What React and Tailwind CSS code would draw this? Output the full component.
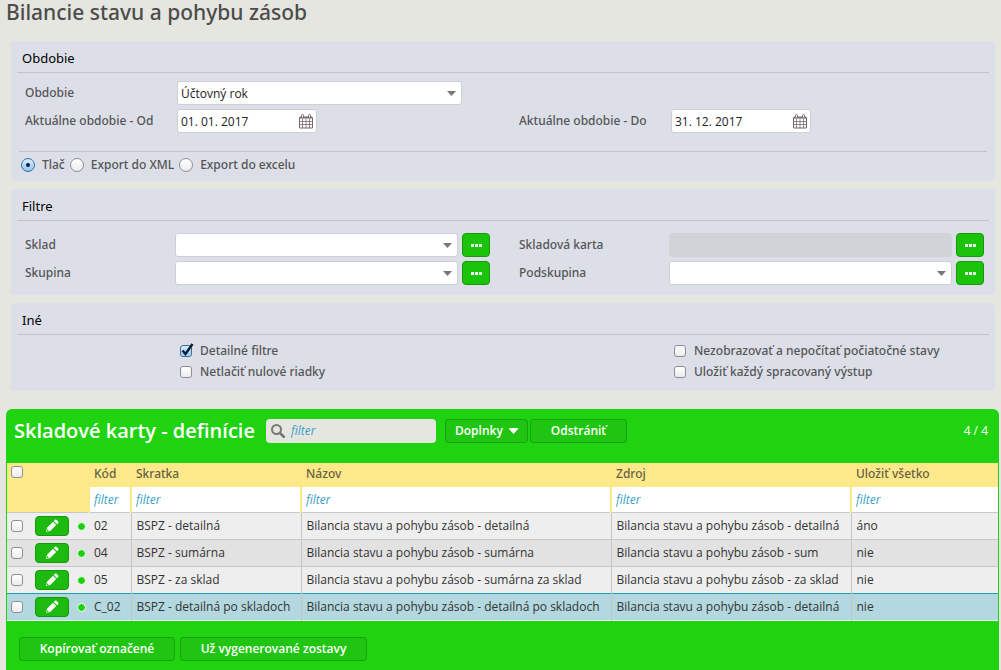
import React, { useState } from "react";

const columns = [
  { key: "code", label: "Kód", width: "w-[42px]" },
  { key: "short", label: "Skratka", width: "w-[170px]" },
  { key: "name", label: "Názov", width: "w-[310px]" },
  { key: "source", label: "Zdroj", width: "w-[240px]" },
  { key: "saveAll", label: "Uložiť všetko", width: "" },
];

const initialRows = [
  {
    code: "02",
    short: "BSPZ - detailná",
    name: "Bilancia stavu a pohybu zásob - detailná",
    source: "Bilancia stavu a pohybu zásob - detailná",
    saveAll: "áno",
  },
  {
    code: "04",
    short: "BSPZ - sumárna",
    name: "Bilancia stavu a pohybu zásob - sumárna",
    source: "Bilancia stavu a pohybu zásob - sum",
    saveAll: "nie",
  },
  {
    code: "05",
    short: "BSPZ - za sklad",
    name: "Bilancia stavu a pohybu zásob - sumárna za sklad",
    source: "Bilancia stavu a pohybu zásob - za sklad",
    saveAll: "nie",
  },
  {
    code: "C_02",
    short: "BSPZ - detailná po skladoch",
    name: "Bilancia stavu a pohybu zásob - detailná po skladoch",
    source: "Bilancia stavu a pohybu zásob - detailná",
    saveAll: "nie",
  },
];

function CalendarIcon() {
  return (
    <svg width="14" height="15" viewBox="0 0 14 15" fill="none" stroke="#75686f">
      <path d="M0.5 3.5h13v10.5h-13z" />
      <path d="M1 3.5h12" strokeWidth="2" />
      <path d="M0.5 7.5h13M0.5 10.5h13M3.5 5v9M7 5v9M10.5 5v9" strokeWidth="0.8" />
      <rect x="2.5" y="0.5" width="2" height="3.5" rx="1" fill="#fff" />
      <rect x="9.5" y="0.5" width="2" height="3.5" rx="1" fill="#fff" />
    </svg>
  );
}

function PencilIcon() {
  return (
    <svg width="14" height="14" viewBox="0 0 14 14" fill="#fff">
      <path d="M1 13 2 8.8 8 2.8 11.2 6 5.2 12z" />
      <path d="M8.8 2 10 0.8q0.7-0.5 1.4 0L13.2 2.6q0.5 0.7 0 1.4L12 5.2z" />
      <path d="M2.2 10.2 3.8 11.8 1.6 12.4z" fill="#1dbb10" />
    </svg>
  );
}

function SearchIcon() {
  return (
    <svg width="14" height="14" viewBox="0 0 14 14" fill="none" stroke="#777">
      <circle cx="5.5" cy="5.5" r="4.5" strokeWidth="2" />
      <path d="m9 9 4 4" strokeWidth="2.5" strokeLinecap="round" />
    </svg>
  );
}

function Checkbox({ className = "", ...props }) {
  return (
    <span className={`relative inline-block h-3 w-3 shrink-0 ${className}`}>
      <input
        type="checkbox"
        className="peer block h-3 w-3 appearance-none rounded-[3px] border border-[#8e8e94] bg-linear-to-b from-white to-[#ececec] checked:border-[#3c6e98] checked:from-[#d3ebfb] checked:to-[#9fd0f3]"
        {...props}
      />
      <svg
        className="pointer-events-none absolute -top-0.5 left-0 hidden h-3.5 w-3.5 peer-checked:block"
        viewBox="0 0 14 14"
        fill="none"
        stroke="#0d1f33"
        strokeWidth="2.5"
      >
        <path d="M2.5 7.5 5.5 11 12.5 1" />
      </svg>
    </span>
  );
}

function Panel({ title, children }) {
  return (
    <section className="rounded bg-[#dcdfe8]">
      <h2 className="mx-1.5 flex h-8 items-center border-b border-[#bfc3cd] px-[5px] pt-1 text-[13px] font-normal text-black">
        {title}
      </h2>
      {children}
    </section>
  );
}

function Select({ id, children }) {
  return (
    <div className="relative min-w-0 flex-1">
      <select
        id={id}
        className="block h-6 w-full appearance-none rounded-[3px] border border-[#ccd0d6] bg-white pt-px pr-6 pl-[3px] font-['Open_Sans',sans-serif] text-xs font-normal text-[#222]"
      >
        {children}
      </select>
      <svg
        className="pointer-events-none absolute top-[10px] right-1.5"
        width="9"
        height="5"
        viewBox="0 0 9 5"
        fill="#777"
      >
        <path d="M0 0h9L4.5 5z" />
      </svg>
    </div>
  );
}

function DateInput({ id, defaultValue }) {
  return (
    <div className="flex h-6 w-[140px] items-center rounded-[3px] border border-[#ccd0d6] bg-white pr-[3px]">
      <input
        id={id}
        type="text"
        defaultValue={defaultValue}
        className="min-w-0 flex-1 pt-px pl-[3px] font-['Open_Sans',sans-serif] text-xs font-normal text-[#222] outline-none"
      />
      <button type="button" aria-label="Kalendár">
        <CalendarIcon />
      </button>
    </div>
  );
}

function LookupButton({ label }) {
  return (
    <button
      type="button"
      aria-label={label}
      className="flex h-6 w-7 shrink-0 items-center justify-center rounded border border-[#17980d] bg-[#1bc40b]"
    >
      <svg width="11" height="3" viewBox="0 0 11 3" fill="#e8fbe6">
        <path d="M0 0h3v3H0zM4 0h3v3H4zM8 0h3v3H8z" />
      </svg>
    </button>
  );
}

function FilterField({ id, label, disabled }) {
  return (
    <div className="flex items-center">
      <label htmlFor={id} className="w-[150px] shrink-0">
        {label}
      </label>
      <div className="flex min-w-0 flex-1 gap-1">
        {disabled ? (
          <input id={id} type="text" disabled className="h-6 min-w-0 flex-1 rounded bg-[#d0d4d8]" />
        ) : (
          <Select id={id} />
        )}
        <LookupButton label={`Vybrať: ${label}`} />
      </div>
    </div>
  );
}

function CheckOption({ label, defaultChecked }) {
  return (
    <label className="flex h-[21px] items-center gap-2 pl-[155px] whitespace-nowrap">
      <Checkbox defaultChecked={defaultChecked} />
      {label}
    </label>
  );
}

function GridButton({ className = "", children }) {
  return (
    <button
      type="button"
      className={`flex h-6 items-center justify-center rounded-[3px] border border-[#18a20d] bg-[#1fc510] text-xs font-semibold whitespace-nowrap text-white ${className}`}
    >
      {children}
    </button>
  );
}

function App() {
  const [output, setOutput] = useState("Tlač");
  const [selected, setSelected] = useState("C_02");

  return (
    <div className="min-h-screen bg-[#e6e6e0] font-['Open_Sans',sans-serif] text-xs text-[#484848]">
      <h1 className="pl-1.5 font-['Noto_Sans',sans-serif] text-[21px] leading-6 font-medium text-[#4c4c4c]">
        Bilancie stavu a pohybu zásob
      </h1>

      <form className="mt-[17px] mr-1.5 ml-[11px] flex flex-col gap-2 font-['Noto_Sans',sans-serif] font-medium text-[#555]">
        <Panel title="Obdobie">
          <div className="grid grid-cols-2 gap-x-[29px] gap-y-1 pt-2 pr-[11px] pb-[18px] pl-3.5">
            <div className="col-span-2 flex items-center">
              <label htmlFor="period" className="w-[152px] shrink-0">
                Obdobie
              </label>
              <div className="flex w-[285px]">
                <Select id="period">
                  <option>Účtovný rok</option>
                </Select>
              </div>
            </div>
            <div className="flex items-center">
              <label htmlFor="from" className="w-[152px] shrink-0">
                Aktuálne obdobie - Od
              </label>
              <DateInput id="from" defaultValue="01. 01. 2017" />
            </div>
            <div className="flex items-center">
              <label htmlFor="to" className="w-[152px] shrink-0">
                Aktuálne obdobie - Do
              </label>
              <DateInput id="to" defaultValue="31. 12. 2017" />
            </div>
          </div>
          <div className="mx-2 flex gap-[5px] border-t border-[#bfc3cd] pt-px pb-1 pl-0.5">
            {["Tlač", "Export do XML", "Export do excelu"].map((option) => (
              <label key={option} className="flex h-6 items-center gap-[7px]">
                <input
                  type="radio"
                  name="output"
                  checked={output === option}
                  onChange={() => setOutput(option)}
                  className="flex h-3.5 w-3.5 appearance-none items-center justify-center rounded-full border border-[#8e8e94] bg-linear-to-b from-white to-[#ededed] checked:border-[#3c6e98] checked:from-[#d9eefc] checked:to-[#8fc6ef] checked:before:h-1 checked:before:w-1 checked:before:rounded-full checked:before:bg-[#0d1f33]"
                />
                {option}
              </label>
            ))}
          </div>
        </Panel>

        <Panel title="Filtre">
          <div className="grid grid-cols-2 gap-x-[29px] gap-y-1 pt-3 pr-[11px] pb-2.5 pl-3.5">
            <FilterField id="stock" label="Sklad" />
            <FilterField id="card" label="Skladová karta" disabled />
            <FilterField id="group" label="Skupina" />
            <FilterField id="subgroup" label="Podskupina" />
          </div>
        </Panel>

        <Panel title="Iné">
          <div className="grid grid-cols-2 gap-x-[29px] pt-[5px] pr-[11px] pb-[9px] pl-3.5">
            <CheckOption label="Detailné filtre" defaultChecked />
            <CheckOption label="Nezobrazovať a nepočítať počiatočné stavy" />
            <CheckOption label="Netlačiť nulové riadky" />
            <CheckOption label="Uložiť každý spracovaný výstup" />
          </div>
        </Panel>
      </form>

      <section className="mt-[18px] mr-0.5 ml-1.5 rounded-t-md bg-[#20d310] px-px">
        <header className="flex items-center pt-2.5 pr-2.5 pb-5 pl-[7px]">
          <h2 className="text-xl leading-6 font-semibold whitespace-nowrap text-white">
            Skladové karty - definície
          </h2>
          <label className="ml-[11px] flex h-6 w-[170px] items-center gap-1.5 rounded bg-[#e6e6e0] pl-[5px]">
            <SearchIcon />
            <input
              type="text"
              aria-label="Hľadať"
              placeholder="filter"
              className="min-w-0 flex-1 italic outline-none placeholder:text-[#3a9fc4]"
            />
          </label>
          <GridButton className="ml-[9px] w-[83px] gap-1.5">
            Doplnky
            <svg width="9" height="6" viewBox="0 0 9 6" fill="#fff">
              <path d="M0 0h9v1L4.5 6 0 1z" />
            </svg>
          </GridButton>
          <GridButton className="ml-0.5 w-[97px]">Odstrániť</GridButton>
          <span className="ml-auto text-white">4 / 4</span>
        </header>

        <table className="w-full table-fixed border-collapse text-left">
          <thead className="bg-[#fee98a] text-[#665f47]">
            <tr className="h-6 font-['Noto_Sans',sans-serif]">
              <th className="w-[82px] p-0 pb-0.5 pl-1">
                <Checkbox className="block" aria-label="Označiť všetko" />
              </th>
              {columns.map((column) => (
                <th key={column.key} className={`p-0 pb-0.5 pl-[5px] font-medium ${column.width}`}>
                  {column.label}
                </th>
              ))}
            </tr>
            <tr className="h-[25px]">
              <td />
              {columns.map((column) => (
                <td key={column.key} className="border-l-2 border-[#fee98a] p-0">
                  <input
                    type="text"
                    aria-label={`Filter: ${column.label}`}
                    placeholder="filter"
                    className="block h-[25px] w-full bg-white pl-1 italic outline-none placeholder:text-[#3a9fc4]"
                  />
                </td>
              ))}
            </tr>
          </thead>
          <tbody className="border-b border-[#f2f7f0] text-[#333]">
            {initialRows.map((row) => {
              const isSelected = selected === row.code;
              const line = isSelected ? "border-t border-t-[#1da0b0]" : "border-t border-t-[#c8c8c8]";
              return (
                <tr
                  key={row.code}
                  onClick={() => setSelected(row.code)}
                  className={`h-[27px] ${
                    isSelected ? "bg-[#b4d8df]" : "odd:bg-[#eeeeee] even:bg-[#e2e2e2]"
                  }`}
                >
                  <td className={`p-0 pl-1 ${line}`}>
                    <div className="flex items-center">
                      <Checkbox aria-label={`Označiť ${row.code}`} />
                      <button
                        type="button"
                        aria-label={`Upraviť ${row.code}`}
                        className="ml-3 flex h-5 w-[34px] items-center justify-center rounded border border-[#17980d] bg-[#1dbb10]"
                      >
                        <PencilIcon />
                      </button>
                      <span className="ml-2 h-[9px] w-[9px] rounded-full border border-white bg-[#1fce10]" />
                    </div>
                  </td>
                  {columns.map((column, i) => (
                    <td
                      key={column.key}
                      className={`overflow-hidden p-0 pl-[5px] whitespace-nowrap ${line} ${
                        i > 0 ? "border-l border-l-[#c4c6c6]" : ""
                      }`}
                    >
                      {row[column.key]}
                    </td>
                  ))}
                </tr>
              );
            })}
          </tbody>
        </table>

        <footer className="flex gap-[5px] pt-4 pr-3 pb-[9px] pl-3">
          <GridButton className="w-[156px]">Kopírovať označené</GridButton>
          <GridButton className="w-[187px]">Už vygenerované zostavy</GridButton>
        </footer>
      </section>
    </div>
  );
}

export default App;
